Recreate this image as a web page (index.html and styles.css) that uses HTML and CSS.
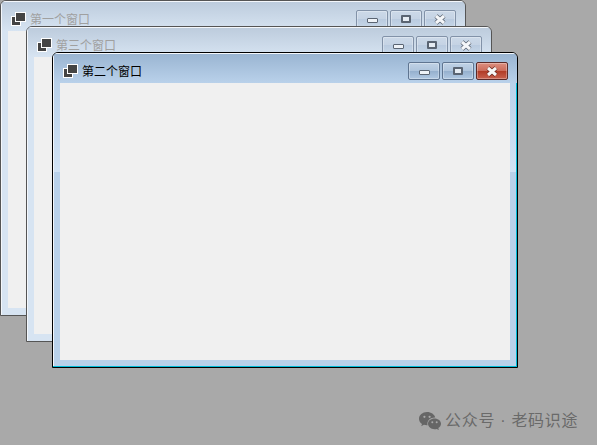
FILE: index.html
```html
<!DOCTYPE html>
<html lang="zh-CN">
<head>
  <meta charset="UTF-8">
  <meta name="viewport" content="width=device-width, initial-scale=1.0">
  <title>窗口</title>
  <link rel="stylesheet" href="styles.css">
</head>
<body>

<!-- 第一个窗口 -->
<div class="window inactive win-first">
  <div class="titlebar">
    <svg class="app-icon" width="15" height="14" viewBox="0 0 15 14">
      <rect x="0.5" y="4.500" width="9" height="9" fill="#444" stroke="#fff"/>
      <rect x="4.500" y="0.5" width="10" height="9" fill="#444" stroke="#fff"/>
    </svg>
    <span class="title-text">第一个窗口</span>
    <div class="caption-btns">
      <div class="cap-btn"><span class="glyph-min"></span></div>
      <div class="cap-btn"><span class="glyph-max"></span></div>
      <div class="cap-btn">
        <svg width="14" height="11" viewBox="0 0 14 11">
          <path d="M3 2l8 7M11 2l-8 7" fill="none" stroke="#5a6472" stroke-width="4.600"/>
          <path d="M3 2l8 7M11 2l-8 7" fill="none" stroke="#f4f6f9" stroke-width="3"/>
        </svg>
      </div>
    </div>
  </div>
  <div class="frame"><div class="client"></div></div>
</div>

<!-- 第三个窗口 -->
<div class="window inactive win-third">
  <div class="titlebar">
    <svg class="app-icon" width="15" height="14" viewBox="0 0 15 14">
      <rect x="0.5" y="4.500" width="9" height="9" fill="#444" stroke="#fff"/>
      <rect x="4.500" y="0.5" width="10" height="9" fill="#444" stroke="#fff"/>
    </svg>
    <span class="title-text">第三个窗口</span>
    <div class="caption-btns">
      <div class="cap-btn"><span class="glyph-min"></span></div>
      <div class="cap-btn"><span class="glyph-max"></span></div>
      <div class="cap-btn">
        <svg width="14" height="11" viewBox="0 0 14 11">
          <path d="M3 2l8 7M11 2l-8 7" fill="none" stroke="#5a6472" stroke-width="4.600"/>
          <path d="M3 2l8 7M11 2l-8 7" fill="none" stroke="#f4f6f9" stroke-width="3"/>
        </svg>
      </div>
    </div>
  </div>
  <div class="frame"><div class="client"></div></div>
</div>

<!-- 第二个窗口 (当前窗口) -->
<div class="window active win-second">
  <div class="titlebar">
    <svg class="app-icon" width="15" height="14" viewBox="0 0 15 14">
      <rect x="0.5" y="4.500" width="9" height="9" fill="#444" stroke="#fff"/>
      <rect x="4.500" y="0.5" width="10" height="9" fill="#444" stroke="#fff"/>
    </svg>
    <span class="title-text">第二个窗口</span>
    <div class="caption-btns">
      <div class="cap-btn"><span class="glyph-min"></span></div>
      <div class="cap-btn"><span class="glyph-max"></span></div>
      <div class="cap-btn btn-close">
        <svg width="14" height="11" viewBox="0 0 14 11">
          <path d="M3 2l8 7M11 2l-8 7" fill="none" stroke="#6b2a20" stroke-width="4.600"/>
          <path d="M3 2l8 7M11 2l-8 7" fill="none" stroke="#f7f7f7" stroke-width="3"/>
        </svg>
      </div>
    </div>
  </div>
  <div class="frame"><div class="client"></div></div>
</div>

<!-- 水印 -->
<div class="watermark">
  <svg width="22" height="18" viewBox="0 0 22 18">
    <path d="M8 0C3.600 0 0 3 0 6.700c0 2.100 1.100 3.900 3 5.200L2.200 14.200l2.700-1.400c1 .3 2 .5 3.100.5h.6a5.600 5.600 0 0 1-.2-1.500c0-3.500 3.300-6.300 7.300-6.300h.5C15.500 2.400 12.100 0 8 0z" fill="#666"/>
    <circle cx="5.400" cy="4.800" r="1.100" fill="#a9a9a9"/>
    <circle cx="10.600" cy="4.800" r="1.100" fill="#a9a9a9"/>
    <path d="M22 11.800c0-3-2.900-5.400-6.500-5.400S9 8.800 9 11.800s2.900 5.400 6.500 5.400c.8 0 1.500-.1 2.200-.3l2.200 1.100-.6-1.900c1.600-1.100 2.700-2.600 2.700-4.300z" fill="#666"/>
    <circle cx="13.300" cy="10.300" r="1" fill="#a9a9a9"/>
    <circle cx="17.700" cy="10.300" r="1" fill="#a9a9a9"/>
  </svg>
  <span>公众号 · 老码识途</span>
</div>

</body>
</html>
```

FILE: styles.css
```css
/* 全局样式 */
* {
  margin: 0;
  padding: 0;
  box-sizing: border-box;
}

body {
  background-color: #a9a9a9;
  width: 597px;
  height: 445px;
  overflow: hidden;
  position: relative;
  font-family: "Liberation Sans", "Noto Sans CJK SC", sans-serif;
}

/* 窗口 */
.window {
  position: absolute;
  width: 466px;
  height: 316px;
  border: 1px solid #555;
  border-radius: 6px 6px 0 0;
  display: flex;
  flex-direction: column;
  overflow: hidden;
}

.win-first { left: 0; top: 0; }
.win-third { left: 26px; top: 26px; }
.win-second { left: 52px; top: 52px; }

.window.active { border-color: #000; }

/* 标题栏 */
.titlebar {
  height: 30px;
  flex: none;
  display: flex;
  align-items: center;
  padding: 6px 9px 0 10px;
  background: linear-gradient(#bccbdc, #d7e4f2);
  box-shadow: inset 1px 1px 0 #f4f7fb;
}

.active .titlebar {
  background: linear-gradient(#99b4d1, #b9d1ea);
}

.app-icon {
  flex: none;
}

.title-text {
  margin-left: 4px;
  padding-top: 2px;
  font-size: 12px;
  line-height: 16px;
  color: #a0a0a0;
}

.active .title-text {
  color: #000;
}

/* 窗口按钮 */
.caption-btns {
  margin-left: auto;
  display: flex;
  gap: 2px;
}

.cap-btn {
  width: 32px;
  height: 18px;
  border: 1px solid #8292a8;
  border-radius: 2px;
  display: flex;
  align-items: center;
  justify-content: center;
  background: linear-gradient(#ccd9e8 0%, #c5d3e4 50%, #b9cadf 50%, #c6d6e8 100%);
  box-shadow: inset 0 0 0 1px rgba(255, 255, 255, 0.3);
}

.active .cap-btn {
  border-color: #5f7591;
  background: linear-gradient(#c0d2e6 0%, #aec4dc 50%, #94afcd 50%, #b0c8e2 100%);
}

.active .btn-close {
  border-color: #5a2a28;
  background: linear-gradient(#dc8f80 0%, #cb6a59 50%, #b03a25 50%, #c8614e 100%);
}

.glyph-min {
  width: 11px;
  height: 5px;
  margin-top: 3px;
  background: #eef2f7;
  border: 1px solid #5a6472;
  border-radius: 1px;
}

.glyph-max {
  width: 10px;
  height: 8px;
  background: #e6ecf3;
  border: 2px solid #5a6472;
  border-radius: 1px;
}

/* 边框与客户区 */
.frame {
  flex: 1;
  padding: 0 7px 7px;
  background: #d7e4f2;
  box-shadow: inset 1px 0 0 #f4f7fb;
}

.active .frame {
  border-bottom: 1px solid #00bcd8;
  padding-bottom: 6px;
  border-right: 1px solid #00bcd8;
  padding-right: 6px;
  background: linear-gradient(#b9d1ea, #d2e3f5 89px, #b9d1ea 89px);
}

.client {
  height: 100%;
  background: #f0f0f0;
}

/* 水印 */
.watermark {
  position: absolute;
  left: 419px;
  top: 411px;
  display: flex;
  align-items: center;
  gap: 4px;
  font-size: 16px;
  line-height: 20px;
  color: #6a6a6a;
  letter-spacing: 0.7px;
  white-space: nowrap;
}
```
